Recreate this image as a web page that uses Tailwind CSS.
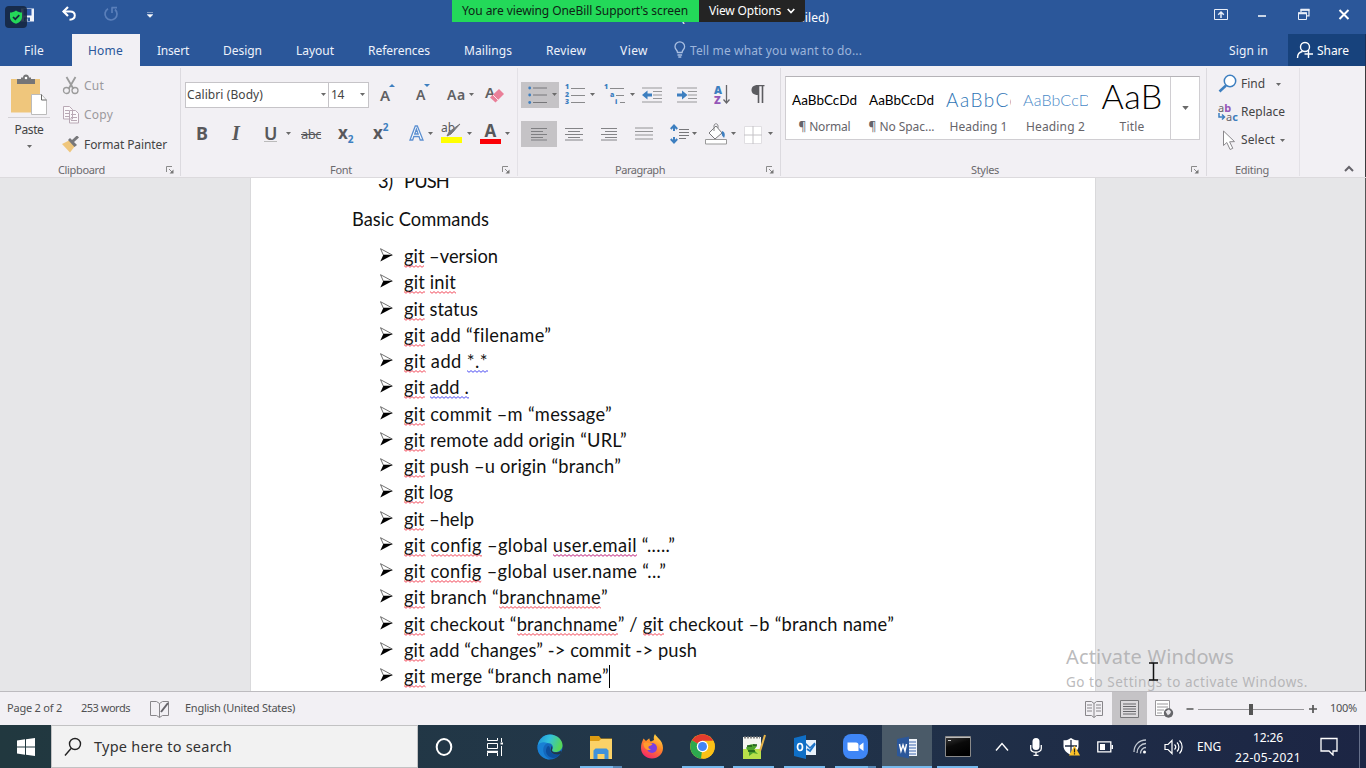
<!DOCTYPE html>
<html lang="en">
<head>
<meta charset="utf-8">
<title>Word</title>
<script src="https://cdn.jsdelivr.net/npm/@tailwindcss/browser@4"></script>
</head>
<body class="w-[1366px] h-[768px] overflow-hidden bg-[#e6e6e8] font-['Noto_Sans','Open_Sans',sans-serif] text-[12px] text-[#444]">
<svg width="0" height="0" class="absolute">
  <defs>
    <pattern id="wred" width="4" height="3" patternUnits="userSpaceOnUse"><path d="M0 .6 2 2.3 4 .6" fill="none" stroke="#f0384a" stroke-width=".9"/></pattern>
    <pattern id="wblue" width="4" height="3" patternUnits="userSpaceOnUse"><path d="M0 .6 2 2.3 4 .6" fill="none" stroke="#3a3af0" stroke-width=".9"/></pattern>
    <pattern id="wplum" width="4" height="3" patternUnits="userSpaceOnUse"><path d="M0 .6 2 2.3 4 .6" fill="none" stroke="#c0207a" stroke-width="1"/></pattern>
    <linearGradient id="edge" x1="0" y1="0" x2="1" y2="0.3"><stop offset="0" stop-color="#1d8fd8"/><stop offset=".5" stop-color="#33c1dc"/><stop offset="1" stop-color="#56d65a"/></linearGradient>
    <linearGradient id="ff" x1="0.8" y1="0" x2="0.3" y2="1"><stop offset="0" stop-color="#ffe14a"/><stop offset=".45" stop-color="#ff8a26"/><stop offset="1" stop-color="#f5246a"/></linearGradient>
    <linearGradient id="cmd" x1="0" y1="0" x2="0.4" y2="1"><stop offset="0" stop-color="#3c3c3c"/><stop offset=".5" stop-color="#0a0a0a"/><stop offset="1" stop-color="#000"/></linearGradient>
    <symbol id="dd" viewBox="0 0 5 3"><path d="M0 0h5L2.5 3z" fill="#6a6a6a"/></symbol>
    <symbol id="launch" viewBox="0 0 8 8"><path d="M.5 6V.5H6M3 3l3 3" fill="none" stroke="#8a8a8a"/><path d="M7.5 3.500v4h-4z" fill="#777"/></symbol>
    <symbol id="bullet" viewBox="0 0 13 14"><path d="M.5.7 12.300 7 3.300 7z" fill="#fff" stroke="#333" stroke-width=".7"/><path d="M12.500 7 .3 13.600 3.300 7z" fill="#000"/></symbol>
  </defs>
</svg>

<div class="relative flex h-[768px] w-[1366px] flex-col">

  <!-- title bar -->
  <header class="flex h-[34px] shrink-0 items-start bg-[#2b579a] text-white">
    <div class="flex w-[536px] pt-[6px]">
      <svg class="ml-[5px]" width="31" height="22" viewBox="5 5 31 22"><path d="M21 7.500h13v13H21z" fill="#f0f3fa"/><path d="M23.500 8h8v6.500h-8z" fill="#2f5aa8"/><path d="M24 16.500h6V20h-6z" fill="#2b579a"/><path d="M25.500 17.500h2V20h-2z" fill="#fff"/><rect x="5" y="5" width="22" height="22" rx="4" fill="#15263f" fill-opacity=".88"/><path d="M16 9.500c2 1.400 4 2 6 2.100v4.400c0 3.500-2.500 5.500-6 6.700-3.500-1.200-6-3.200-6-6.700v-4.400c2-.1 4-.7 6-2.100z" fill="#24d759"/><path d="m13 16 2.300 2.200 4-4" fill="none" stroke="#15263f" stroke-width="1.700"/></svg>
      <svg class="ml-[25px]" width="16" height="16" viewBox="0 0 16 16"><path d="M2 5.500h7c3 0 4.800 1.700 4.800 4 0 2.700-2 4-5.300 4.200" fill="none" stroke="#fff" stroke-width="2"/><path d="M7 1 2.500 5.500 7 10" fill="none" stroke="#fff" stroke-width="2.200"/></svg>
      <svg class="ml-[26px]" width="16" height="16" viewBox="0 0 16 16"><path d="M5 2.800A6 6 0 1 0 12 3.500" fill="none" stroke="#5a7fba" stroke-width="1.700"/><path d="M8.500 1.700H14M9 1.500V7" fill="none" stroke="#5a7fba" stroke-width="1.700"/></svg>
      <svg class="ml-[28px] mt-[6px]" width="6" height="6" viewBox="0 0 6 6"><path d="M0 .5h6M0 2.500h6L3 5.500z" fill="#fff" stroke="#fff" stroke-width=".4"/></svg>
    </div>
    <div class="w-[676px] pt-[9px] leading-[18px]"><span data-w="293" class="text-[12px]">Git -Notes-OneBill - Word (Product Activation Failed)</span></div>
    <svg class="mt-[8px]" width="150" height="14" viewBox="1212 8 150 14" fill="none" stroke="#e9eef8"><path d="M1214.500 9.500h13v10h-13z"/><path d="M1221 18v-6m-2.800 2.800 2.800-2.800 2.800 2.800" stroke-width="1.500"/><path d="M1258 16h8" stroke="#fff" stroke-width="1.500"/><path d="M1301 12v-2.200h8v6h-2" stroke-width="1.200"/><path d="M1298.500 13h8v6.500h-8z"/><path d="M1298 13.300h9M1300.500 9.700h9" stroke-width="2"/><path d="m1339.500 10 9 9m0-9-9 9" stroke="#fff" stroke-width="2"/></svg>
  </header>

  <!-- tabs -->
  <nav class="flex h-[32px] shrink-0 items-stretch bg-[#2b579a] text-[12px] leading-[33px] text-[#eef2fa]">
    <div class="w-[72px] pl-[24px]"><span data-w="20">File</span></div>
    <div class="w-[68px] bg-[#f2f0f4] pl-[16px] text-[#2b579a]"><span data-w="35">Home</span></div>
    <div class="w-[83px] pl-[17px]"><span data-w="32">Insert</span></div>
    <div class="w-[73px]"><span data-w="39">Design</span></div>
    <div class="w-[72px]"><span data-w="38">Layout</span></div>
    <div class="w-[96px]"><span data-w="62">References</span></div>
    <div class="w-[82px]"><span data-w="48">Mailings</span></div>
    <div class="w-[74px]"><span data-w="40">Review</span></div>
    <div class="w-[53px]"><span data-w="28">View</span></div>
    <div class="flex w-[556px] items-center text-[#9db5db]">
      <svg width="14" height="18" viewBox="0 0 14 18" fill="none" stroke="#a9bfe2" stroke-width="1.300"><path d="M4.500 11.500C4.500 9 2 8.500 2 5.700a4.800 4.800 0 0 1 9.600 0c0 2.800-2.500 3.300-2.500 5.800zM4.500 14h4.600M5.300 16h3"/></svg>
      <span class="ml-[3px]" data-w="172">Tell me what you want to do...</span>
    </div>
    <div class="w-[59px]"><span data-w="39">Sign in</span></div>
    <div class="flex w-[77px] items-center bg-[#17427c] text-white">
      <svg class="ml-[8px]" width="18" height="18" viewBox="0 0 18 18" fill="none" stroke="#fff" stroke-width="1.400"><circle cx="9" cy="6" r="4.500"/><path d="M1.500 17c0-3.500 2-6 5-6.500M12.500 9v8M8.500 13H17"/></svg>
      <span class="ml-[3px]" data-w="32">Share</span>
    </div>
    <div class="w-px bg-[#17305c]"></div>
  </nav>

  <!-- ribbon -->
  <section class="flex h-[112px] shrink-0 border-b border-[#dcdadd] bg-[#f2f0f4] pt-[2px]">

    <!-- clipboard -->
    <div class="flex h-[108px] w-[181px] flex-col border-r border-[#dcdadf]">
      <div class="flex h-[92px] shrink-0">
        <div class="flex w-[58px] flex-col items-center pt-[6px]">
          <svg width="38" height="42" viewBox="13 74 38 42"><path d="M14 79h29v33.500H14z" fill="#efc67c"/><path d="M20 79h4v-1.500h2c0-4 6-4 6 0h2V79h4v5H20z" fill="#757577"/><circle cx="29" cy="78" r="1.300" fill="#fff"/><path d="M34.500 94.500h10l5 5.500v14.500h-15z" fill="#fff" stroke="#bbb"/><path d="M44.500 94.500v5.500h5" fill="none" stroke="#666"/></svg>
          <div class="mt-[1px] h-px w-[42px] bg-[#d3d1d5]"></div>
          <span class="mt-[4px] leading-[16px]" data-w="29">Paste</span>
          <svg class="mt-[7px]" width="5" height="3"><use href="#dd"/></svg>
        </div>
        <div class="flex flex-col pl-[4px] pt-[3px]">
          <div class="flex h-[29px] items-center text-[#9b999d]"><svg width="18" height="19" viewBox="0 0 18 19" fill="none" stroke="#9b9b9b" stroke-width="1.300"><path d="m4.500 1 7 12M13.500 1l-7 12" stroke-width="1.800"/><circle cx="4.500" cy="14.500" r="3"/><circle cx="13" cy="14.500" r="3"/></svg><span class="ml-[4px]" data-w="20">Cut</span></div>
          <div class="flex h-[30px] items-center text-[#9b999d]"><svg width="18" height="20" viewBox="0 0 18 20" fill="#fbf9fb" stroke="#b9a9b5"><path d="M1.500 1.500h6l3 3V14h-9zM7.500 5.500h6l3 3V18h-9z"/><path d="M3 5.500h4m-4 3h4m-4 3h4m2-2h5m-5 3h6m-6 3h6"/></svg><span class="ml-[4px]" data-w="29">Copy</span></div>
          <div class="flex h-[29px] items-center"><svg width="18" height="17" viewBox="0 0 18 17"><path d="m0 8 8-4 5 6-5 6.500z" fill="#efc67c"/><path d="m6 4 2-2 7 7-2.500 2z" fill="#77777a"/><path d="m10.500 5.500 5.500-5" stroke="#77777a" stroke-width="3"/></svg><span class="ml-[4px]" data-w="83">Format Painter</span></div>
        </div>
      </div>
      <div class="flex h-[20px] shrink-0 items-center pl-[58px] text-[11px] text-[#6b696d]"><span class="w-[108px]"><span data-w="47">Clipboard</span></span><svg width="8" height="8"><use href="#launch"/></svg></div>
    </div>

    <!-- font -->
    <div class="flex h-[108px] w-[337px] flex-col border-r border-[#e3e1e6]">
      <div class="flex h-[53px] shrink-0 items-center pl-[4px]">
        <div class="flex h-[26px] w-[144px] items-center justify-between border border-[#c6c4c8] bg-white pl-[1px] pr-[2px]"><span data-w="76">Calibri (Body)</span><svg width="5" height="3"><use href="#dd"/></svg></div>
        <div class="-ml-px flex h-[26px] w-[41px] items-center justify-between border border-[#c6c4c8] bg-white pl-[2px] pr-[3px]"><span data-w="13">14</span><svg width="5" height="3"><use href="#dd"/></svg></div>
        <div class="flex w-[36px] pl-[11px] text-[15px] font-semibold leading-[20px] text-[#606063]">A<svg class="mt-[-1px] -ml-px" width="6" height="3"><path d="M0 3 3 0l3 3z" fill="#3d7fc0"/></svg></div>
        <div class="flex w-[42px] pl-[11px] text-[14px] font-semibold leading-[20px] text-[#606063]">A<svg class="mt-[-1px] -ml-px" width="6" height="3"><path d="M0 0h6L3 3z" fill="#3d7fc0"/></svg></div>
        <div class="flex w-[38px] items-center text-[14px] font-semibold text-[#606063]"><span data-w="19">Aa</span><svg class="ml-[3px]" width="5" height="3"><use href="#dd"/></svg></div>
        <div class="relative w-[22px] text-[15px] font-semibold leading-[18px] text-[#606063]"><span class="block pb-[5px]">A</span><svg class="absolute left-[4px] top-[6px]" width="16" height="14" viewBox="0 0 16 14"><path d="m10 0 5 5-8.500 8.500-5.500-5z" fill="#ea7f98"/><path d="m4 6 5 5" stroke="#fff" stroke-width=".8"/></svg></div>
      </div>
      <div class="flex h-[39px] shrink-0 items-start pl-[15px] text-[18px] font-bold leading-[24px] text-[#58585b]">
        <span class="w-[34px]">B</span>
        <span class="w-[34px] pl-[2px] font-['Liberation_Serif'] text-[20px] italic">I</span>
        <span class="flex w-[22px]"><span class="h-[21px] border-b border-[#bbb] font-semibold">U</span></span>
        <svg class="mt-[11px] mr-[10px]" width="5" height="3"><use href="#dd"/></svg>
        <span class="w-[37px] pt-[1px] text-[13px] font-normal line-through"><span data-w="20" class="line-through">abc</span></span>
        <span class="flex w-[35px] text-[17px]">x<span class="pt-[6px] text-[10px] text-[#3d7fc0]">2</span></span>
        <span class="flex w-[35px] text-[17px]">x<span class="pt-px text-[10px] leading-[10px] text-[#3d7fc0]">2</span></span>
        <svg class="mt-[3px]" width="17" height="19" viewBox="0 0 17 19"><path d="M2 16 7.300 2h2L15 16h-2.800l-1.200-3.500H5.800L4.700 16zM6.700 10h3.500L8.400 5z" fill="#fff" stroke="#5c8fd0" stroke-width="1.300"/></svg>
        <svg class="ml-[3px] mt-[11px]" width="5" height="3"><use href="#dd"/></svg>
        <div class="relative ml-[8px] h-[24px] w-[22px] text-[12px] font-normal leading-[13px]">ab<svg class="absolute left-0 top-[1px]" width="22" height="22"><path d="m19 2-9 10-4 2 2-4z" fill="#77777a" stroke="#77777a"/><path d="M0 15h21v6H0z" fill="#ff0"/></svg></div>
        <svg class="ml-[4px] mt-[11px]" width="5" height="3"><use href="#dd"/></svg>
        <div class="ml-[8px] flex h-[23px] w-[21px] justify-center border-b-[5px] border-[#fb0006] text-[17px] leading-[20px]">A</div>
        <svg class="ml-[4px] mt-[11px]" width="5" height="3"><use href="#dd"/></svg>
      </div>
      <div class="flex h-[20px] shrink-0 items-center pl-[149px] text-[11px] text-[#6b696d]"><span class="w-[172px]"><span data-w="22">Font</span></span><svg width="8" height="8"><use href="#launch"/></svg></div>
    </div>

    <!-- paragraph -->
    <div class="flex h-[108px] w-[263px] flex-col border-r border-[#dcdadf]">
      <div class="flex h-[53px] shrink-0 items-center pl-[3px] text-[#3d7fc0]">
        <div class="flex h-[26px] w-[38px] items-center bg-[#c5c3c6] pl-[7px]"><svg width="20" height="20" viewBox="0 0 20 20"><path d="M5 3h14M5 10h14M5 17.500h14" stroke="#77777a"/><g fill="#3d7fc0"><circle cx="1.700" cy="3" r="1.400"/><circle cx="1.700" cy="10" r="1.400"/><circle cx="1.700" cy="17.500" r="1.400"/></g></svg><svg class="ml-[4px]" width="5" height="3"><use href="#dd"/></svg></div>
        <div class="flex w-[38px] items-center pl-[6px]"><span class="flex w-[5px] flex-col text-[7px] font-bold leading-[7.500px]"><b>1</b><b>2</b><b>3</b></span><svg width="15" height="20"><path d="M1 3.500h14M1 10.500h14M1 17.500h14" stroke="#8a8a8c"/></svg><svg class="ml-[5px]" width="5" height="3"><use href="#dd"/></svg></div>
        <div class="flex w-[45px] items-center pl-[7px]"><span class="flex w-[15px] flex-col text-[7px] font-bold leading-[7.500px]"><b>1</b><b class="pl-[6px]">a</b><b class="pl-[11px]">i</b></span><svg class="-ml-[11px]" width="17" height="20"><path d="M2 3.500h14M8 10.500h8M12 17.500h5" stroke="#8a8a8c"/></svg><svg class="ml-[5px]" width="5" height="3"><use href="#dd"/></svg></div>
        <svg class="mr-[15px]" width="20" height="16" viewBox="0 0 20 16"><path d="M0 1h20M11 4.500h9M11 8h9M11 11.500h9M0 15h20" stroke="#98989a"/><path d="M5.500 3.500 0 8l5.500 4.500V9.500H10v-3H5.500z" fill="#3d7fc0"/></svg>
        <svg class="mr-[17px]" width="20" height="16" viewBox="0 0 20 16"><path d="M0 1h20M11 4.500h9M11 8h9M11 11.500h9M0 15h20" stroke="#98989a"/><path d="M5 3.500 10.500 8 5 12.500V9.500H0v-3h5z" fill="#3d7fc0"/></svg>
        <div class="flex w-[37px] items-center"><span class="flex w-[9px] flex-col text-[11px] font-bold leading-[10px]"><b>A</b><b class="text-[#9556b8]">Z</b></span><svg width="7" height="20"><path d="M3.500 0v18M.5 14.500l3 3.500 3-3.500" fill="none" stroke="#66666a" stroke-width="1.300"/></svg></div>
        <svg width="14" height="19" viewBox="0 0 14 19"><path d="M6 .5h7.500M7.500 0v18M11.500 0v18" stroke="#5c5c60" stroke-width="1.600"/><path d="M7 0v10C2 10 .5 7.500.5 5S2 0 7 0z" fill="#5c5c60"/></svg>
      </div>
      <div class="flex h-[39px] shrink-0 items-start pl-[3px]">
        <div class="flex h-[26px] w-[36px] items-center justify-center bg-[#c5c3c6]"><svg width="18" height="14"><path d="M1 1.500h16M1 4.500h12M1 7.500h16M1 10.500h12M1 13h16" stroke="#77777a" stroke-width=".9"/></svg></div>
        <svg class="ml-[8px] mt-[6px]" width="18" height="14"><path d="M0 1.500h18M3 4.500h12M0 7.500h18M3 10.500h12M0 13h18" stroke="#77777a" stroke-width=".9"/></svg>
        <svg class="ml-[17px] mt-[6px]" width="18" height="14"><path d="M1 1.500h16M5 4.500h12M1 7.500h16M5 10.500h12M1 13h16" stroke="#77777a" stroke-width=".9"/></svg>
        <svg class="ml-[17px] mt-[6px]" width="18" height="14"><path d="M0 1h18M0 4.500h18M0 8h18M0 12h18" stroke="#88888a" stroke-width=".9"/></svg>
        <svg class="ml-[17px] mt-[3px]" width="19" height="20" viewBox="0 0 19 20"><path d="M4 2v5M4 18v-5M.8 5 4 1.500 7.200 5M.8 15 4 18.500 7.200 15" fill="none" stroke="#3d7fc0" stroke-width="2"/><path d="M9 5.500h10M9 8.500h10M9 11.500h10M9 14.500h7" stroke="#77777a"/></svg>
        <svg class="ml-[3px] mt-[11px]" width="5" height="3"><use href="#dd"/></svg>
        <svg class="ml-[8px] mt-[2px]" width="22" height="22" viewBox="0 0 22 22"><path d="m4 10 7-7 6 7-7 6z" fill="#fff" stroke="#77777a"/><path d="M9 8V3c0-3 4-3 4 0v2" fill="none" stroke="#88888a"/><path d="M17 8c3 1 3.500 4 2 7-1-2-3-2-2-7z" fill="#3d7fc0"/><path d="M.5 16.500h21V21H.5z" fill="#fff" stroke="#999"/></svg>
        <svg class="ml-[4px] mt-[11px]" width="5" height="3"><use href="#dd"/></svg>
        <svg class="ml-[8px] mt-[5px]" width="18" height="18"><path d="M.5.5h17v17H.5z" fill="#fff" stroke="#e0dee2"/><path d="M9 0v18M0 9h18" stroke="#c4c2c6"/></svg>
        <svg class="ml-[6px] mt-[11px]" width="5" height="3"><use href="#dd"/></svg>
      </div>
      <div class="flex h-[20px] shrink-0 items-center pl-[97px] text-[11px] text-[#6b696d]"><span class="w-[151px]"><span data-w="50">Paragraph</span></span><svg width="8" height="8"><use href="#launch"/></svg></div>
    </div>

    <!-- styles -->
    <div class="flex h-[108px] w-[426px] flex-col border-r border-[#dcdadf]">
      <div class="flex h-[92px] shrink-0 items-start pl-[4px] pt-[8px]">
        <div class="flex h-[64px] w-[415px] border border-t-[#b5b3b7] border-[#d0ced2] bg-white text-[#66646a]">
          <div class="flex w-[77px] flex-col items-center"><span class="h-[40px] pt-[13px] font-['Lato'] text-[13.500px] leading-[20px] text-black"><span data-w="65">AaBbCcDd</span></span><span class="leading-[19px]"><span data-w="52">¶ Normal</span></span></div>
          <div class="flex w-[77px] flex-col items-center"><span class="h-[40px] pt-[13px] font-['Lato'] text-[13.500px] leading-[20px] text-black"><span data-w="65">AaBbCcDd</span></span><span class="leading-[19px]"><span data-w="66">¶ No Spac...</span></span></div>
          <div class="flex w-[77px] flex-col items-center"><span class="h-[40px] w-[65px] overflow-hidden whitespace-nowrap pt-[12px] font-['Lato'] text-[19px] font-light leading-[22px] text-[#2e74b5]"><span data-w="74">AaBbCc</span></span><span class="leading-[19px]"><span data-w="58">Heading 1</span></span></div>
          <div class="flex w-[77px] flex-col items-center"><span class="h-[40px] w-[65px] overflow-hidden whitespace-nowrap pt-[13px] font-['Lato'] text-[16px] font-light leading-[20px] text-[#4a8ac8]"><span data-w="68">AaBbCcD</span></span><span class="leading-[19px]"><span data-w="59">Heading 2</span></span></div>
          <div class="flex w-[76px] flex-col items-center"><span class="h-[40px] font-['Lato'] text-[34px] font-light leading-[38px] text-black"><span data-w="61">AaB</span></span><span class="leading-[19px]"><span data-w="25">Title</span></span></div>
          <div class="flex flex-1 items-center justify-center border-l border-[#d0ced2]"><svg width="7" height="4" viewBox="0 0 5 3"><use href="#dd"/></svg></div>
        </div>
      </div>
      <div class="flex h-[20px] shrink-0 items-center pl-[190px] text-[11px] text-[#6b696d]"><span class="w-[220px]"><span data-w="28">Styles</span></span><svg width="8" height="8"><use href="#launch"/></svg></div>
    </div>

    <!-- editing -->
    <div class="flex h-[108px] w-[93px] flex-col border-r border-[#e3e1e6]">
      <div class="flex h-[92px] shrink-0 flex-col pl-[11px] pt-[2px]">
        <div class="flex h-[28px] items-center"><svg width="20" height="20" viewBox="0 0 20 20"><circle cx="12" cy="7" r="5.700" fill="#fff" stroke="#3d7fc0" stroke-width="1.500"/><path d="m8 11.500-6.500 6" stroke="#3d7fc0" stroke-width="2.500"/></svg><span class="ml-[3px]" data-w="24">Find</span><svg class="ml-[11px]" width="5" height="3"><use href="#dd"/></svg></div>
        <div class="flex h-[28px] items-center"><div class="relative w-[21px] text-[11px] leading-[9px] text-[#66646a]"><span>a<b class="text-[#9556b8]">b</b></span><span class="block pl-[8px]">a<b class="text-[#3d7fc0]">c</b></span><svg class="absolute left-0 top-[10px]" width="8" height="8"><path d="M1 0v4h5M4 1.500 6.500 4 4 6.500" fill="none" stroke="#3d7fc0" stroke-width="1.500"/></svg></div><span class="ml-[2px]" data-w="44">Replace</span></div>
        <div class="flex h-[28px] items-center"><svg class="ml-[4px]" width="14" height="21" viewBox="0 0 14 21"><path d="M1.500 1v14.500l3.300-3 3.300 7 2.700-1.200-3.200-6.500 4.900-.2z" fill="#fff" stroke="#8a888c"/></svg><span class="ml-[5px]" data-w="34">Select</span><svg class="ml-[5px]" width="5" height="3"><use href="#dd"/></svg></div>
      </div>
      <div class="flex h-[20px] shrink-0 items-center pl-[28px] text-[11px] text-[#6b696d]"><span data-w="34">Editing</span></div>
    </div>
    <div class="flex flex-1 items-end justify-end pb-[5px] pr-[11px]"><svg width="10" height="7"><path d="m1 6 4-4 4 4" fill="none" stroke="#66646a" stroke-width="2"/></svg></div>
    <div class="-mt-[2px] w-px bg-[#3a3a3c]"></div>
  </section>

  <!-- document -->
  <main class="relative flex h-[513px] shrink-0 justify-start overflow-hidden bg-[#e6e6e8] pl-[250px] text-[18.300px] text-[#111]">
    <div id="page" class="flex h-[513px] w-[846px] flex-col border-x border-[#d9d9db] bg-white font-['Lato'] leading-[26.200px]">
      <div class="-mt-[10px] flex h-[26px] shrink-0 pl-[127px]"><span class="w-[26px]"><span data-w="15">3)</span></span><span data-w="45">PUSH</span></div>
      <div class="mt-[12px] flex h-[26px] shrink-0 pl-[101px]"><span data-w="137">Basic Commands</span></div>
      <ul id="list" class="mt-[11px] flex flex-col"></ul>
    </div>
    <div class="absolute left-[1066px] top-[466px] flex flex-col text-[#a9a9ab]/80">
      <span class="text-[20px] leading-[26px]"><span data-w="168">Activate Windows</span></span>
      <span class="text-[13.500px] leading-[24px]"><span data-w="242">Go to Settings to activate Windows.</span></span>
    </div>
    <svg class="absolute left-[1148px] top-[484px]" width="11" height="19"><path d="M1 1h9M1 18h9M5.500 1v17" stroke="#111" stroke-width="1.500"/></svg>
    <div class="absolute right-0 top-0 h-full w-px bg-[#555]"></div>
  </main>

  <!-- status bar -->
  <footer class="flex h-[34px] shrink-0 items-center border-t border-[#bdbbbf] bg-[#f2f0f4] text-[11px] text-[#505052]">
    <span class="w-[81px] pl-[7px]"><span data-w="55">Page 2 of 2</span></span>
    <span class="w-[69px]"><span data-w="49">253 words</span></span>
    <svg width="20" height="20" viewBox="0 0 20 20" fill="none" stroke="#88868a"><path d="M.5 2.500h6l3 2 3-2h6v14h-6l-3 2-3-2h-6zM9.500 4.500v14"/><path d="m11 13 7-9" stroke="#66646a" stroke-width="2"/></svg>
    <span class="ml-[15px] w-[900px]"><span data-w="110">English (United States)</span></span>
    <svg width="18" height="20" viewBox="0 0 18 20" fill="none" stroke="#88868a"><path d="M.5 2.500h6l2.500 2 2.500-2h6v14h-6l-2.500 2-2.500-2h-6zM9 4.500v14M2 6h5M2 9h5M2 12h5M11 6h5M11 9h5M11 12h5"/></svg>
    <div class="ml-[9px] flex h-[33px] w-[35px] items-center justify-center bg-[#c5c3c6]"><svg width="19" height="18"><path d="M.5.5h18v17H.5z" fill="#dcdadd" stroke="#77777a"/><path d="M3 4h13M3 6.500h13M3 9h13M3 11.500h13M3 14h13" stroke="#66666a"/></svg></div>
    <svg class="ml-[8px]" width="20" height="20" viewBox="0 0 20 20"><path d="M.5 1.500h14v15H.5z" fill="#fff" stroke="#99979b"/><path d="M2 5h11M2 8h11M2 11h7M2 14h5" stroke="#99979b"/><circle cx="13.500" cy="14" r="4.700" fill="#66666a"/><path d="M10.500 12.500c2-.5 3-3 4-1.500s2 1 1 3-2 1-2.500 2.500z" fill="#e8e6ea"/></svg>
    <svg class="ml-[10px]" width="134" height="14" viewBox="1185 0 134 14"><path d="M1186.500 7h7M1309 7h8M1313 3v8" stroke="#555" stroke-width="1.700"/><path d="M1198 7.500h106" stroke="#99979b"/><path d="M1249 2h4v11h-4z" fill="#555"/></svg>
    <span class="ml-[11px]" data-w="27">100%</span>
  </footer>

  <!-- taskbar -->
  <div class="flex h-[43px] shrink-0 items-stretch bg-gradient-to-r from-[#21383f] via-[#22364a] to-[#1c2544] text-white">
    <div class="flex w-[51px] items-center justify-center"><svg width="18" height="18" viewBox="0 0 18 18" fill="#fff"><path d="m0 2.500 8-1.200V8.500H0zM9 1.200 18 0v8.500H9zM0 9.500h8v7.200l-8-1.200zM9 9.500h9V18l-9-1.300z"/></svg></div>
    <div class="flex w-[367px] items-center border border-[#c2c2c3] bg-[#f2f2f2] text-[#333]"><svg class="ml-[12px]" width="18" height="22" viewBox="0 0 18 22" fill="none" stroke="#222" stroke-width="1.400"><circle cx="11" cy="8" r="5.500"/><path d="m7 12.500-6 7"/></svg><span class="ml-[12px] text-[14.500px]" data-w="138">Type here to search</span></div>
    <div class="flex w-[51px] items-center justify-center"><svg width="18" height="20"><ellipse cx="9" cy="10" rx="7.300" ry="8" fill="none" stroke="#fff" stroke-width="2"/></svg></div>
    <div class="mr-[4px] flex w-[51px] items-center justify-center"><svg width="18" height="18" viewBox="0 0 18 18" fill="none" stroke="#fff"><path d="M1.500 0v2.500h10V0M1.500 5.500h10v5h-10zM1.500 18v-3.500h10V18M15.500 0v4M15.500 8v10"/><path d="M14.500 5.500h2.500" stroke-width="2"/><path d="M1 13.500h11" stroke-width="1.500"/></svg></div>
    <div class="flex w-[51px] items-center justify-center"><svg width="26" height="26" viewBox="0 0 26 26"><circle cx="13" cy="13" r="12.500" fill="#1468bd"/><path d="M.7 12C1.500 5 7 .5 13 .5c7 0 12.500 5 12.500 11 0 4-3.500 6.500-7 6.500-3 0-4-1.500-3-3 1.500-3-1-6-5-6-5 0-8.500 3-9.800 3z" fill="url(#edge)"/><path d="M10.500 9C4 12 5 22 13 25.500 3 25.500-1 16 1 11c2-3 6-3.500 9.500-2z" fill="#1980d4"/><path d="M13 15c0 5 6 7 11 4-2 3-5 5-8 5-7-1-9-8-5-12 1.500 0 2 1.500 2 3z" fill="#0d4e9c"/><path d="M14.500 12c2 2-.5 4 1 5.500 2 1.500 6.500 1 9-1v3c-4 2-10 1-11-3z" fill="#21364a"/></svg></div>
    <div class="flex w-[51px] flex-col items-center justify-between pt-[10px]"><svg width="24" height="25" viewBox="0 0 24 25"><path d="M1 1h9l2 2.500h11v5H1z" fill="#dc9b12"/><path d="M1 6h9l2-2h11v20H1z" fill="#fbd267"/><path d="M4.500 24v-8.500l2-2h11l2 2V24h-4v-5h-7v5z" fill="#3f92dc"/></svg><div class="flex h-[2px] w-[42px]"><div class="w-[33px] bg-[#76b9ed]"></div><div class="w-[9px] bg-[#5687b5]"></div></div></div>
    <div class="flex w-[51px] items-center justify-center"><svg width="24" height="25" viewBox="0 0 24 25"><path d="M15 0c1 3 8 6 8 14 0 6-5 10.500-11 10.500S1 20 1 14C1 10 2 8 3.500 4.500L6 7l3-2.500c1-.5 0 2 2 3L14 6c-.5-2-.3-4 1-6z" fill="url(#ff)"/><circle cx="12" cy="14" r="5" fill="#7a3fe0"/><path d="M3.500 9c3-2 5 0 8 .5 2 .3 0 2-2 2.500s-1 3 1.500 3.500c-4 2-8-2-7.500-6.500z" fill="#ff9a2e"/></svg></div>
    <div class="flex w-[51px] flex-col items-center justify-between pt-[9px]"><svg width="25" height="25" viewBox="0 0 24 24"><circle cx="12" cy="12" r="11.800" fill="#fbc117"/><path d="M12 12 1.800 6.100a11.800 11.800 0 0 1 20.400 0z" fill="#e33b2e"/><path d="M1.800 6.100 12 12l0 0-1.500 11.700A11.800 11.800 0 0 1 1.800 6.100z" fill="#2da94f"/><path d="M12 6.500h10.500A11.800 11.800 0 0 1 12 23.800l5-9z" fill="#fbc117"/><circle cx="12" cy="12" r="5.500" fill="#fff"/><circle cx="12" cy="12" r="4.300" fill="#4285f4"/></svg><div class="h-[2px] w-[42px] bg-[#76b9ed]"></div></div>
    <div class="flex w-[51px] flex-col items-center justify-between pt-[9px]"><svg width="24" height="26" viewBox="0 0 24 26"><path d="M1 3h18v22H1z" fill="#f5f5f0"/><path d="M1 15h18v10H1z" fill="#b8e04a"/><path d="M2 3.500h16" stroke="#888" stroke-dasharray="2 1" stroke-width="2"/><path d="M4 14c2-4 8-5 11-2l-3 4 4 4-5-1-4 3v-4z" fill="#4da32c"/><path d="M5 12h5M11 11h4M6 17h7" stroke="#1e5a1a" stroke-width="1.500"/><path d="m23 1-5 16" stroke="#e8b54a" stroke-width="2"/></svg><div class="h-[2px] w-[41px] bg-[#76b9ed]"></div></div>
    <div class="flex w-[51px] flex-col items-center justify-between pt-[9px]"><svg width="24" height="26" viewBox="0 0 24 26"><path d="M11 6h12v15H11z" fill="#e9f2fb"/><path d="m12 9 5 5 5-5" fill="none" stroke="#1e74c8" stroke-width="1.500"/><path d="m14 15 3 2 5-7" fill="none" stroke="#1e74c8" stroke-width="2"/><path d="m1 4 12-3v24L1 22z" fill="#0f6fc6"/><ellipse cx="7" cy="13" rx="2.500" ry="3.500" fill="none" stroke="#fff" stroke-width="1.700"/></svg><div class="h-[2px] w-[41px] bg-[#76b9ed]"></div></div>
    <div class="flex w-[51px] flex-col items-center justify-between pt-[9px]"><svg width="25" height="25" viewBox="0 0 25 25"><rect width="25" height="25" rx="8" fill="#3f86f6"/><path d="M4.500 8.500H13q2.500 0 2.500 2.500v6H7q-2.500 0-2.500-2.500zM16.500 11.500l4-3v8.500l-4-3z" fill="#fff"/></svg><div class="flex h-[2px] w-[41px]"><div class="w-[33px] bg-[#76b9ed]"></div><div class="w-[8px] bg-[#5687b5]"></div></div></div>
    <div class="ml-[1px] flex w-[50px] flex-col items-center justify-between bg-[#4a5a68] pt-[11px]"><svg width="22" height="23" viewBox="0 0 22 23"><path d="M11 3h10v17H11z" fill="#f0f4fa"/><path d="M13 6h7M13 9h7M13 12h7M13 15h7M13 18h7" stroke="#3d66ae"/><path d="m1 3 12-2.500v22L1 20z" fill="#2b579a"/><path d="m3.500 8 1.500 7 2-6 2 6 1.500-7" fill="none" stroke="#fff" stroke-width="1.400"/></svg><div class="h-[2px] w-[50px] bg-[#76b9ed]"></div></div>
    <div class="flex w-[51px] flex-col items-center justify-between pt-[11px]"><svg width="26" height="21"><path d="M.5.5h25v20H.5z" fill="url(#cmd)" stroke="#8a8a8a"/><path d="M1 1.500h24" stroke="#bbb"/><path d="M3 4.500h3" stroke="#ccc"/></svg><div class="h-[2px] w-[41px] bg-[#76b9ed]"></div></div>
    <div class="flex w-[38px] items-center justify-center"><svg width="14" height="10"><path d="m1 8.500 6-7 6 7" fill="none" stroke="#fff" stroke-width="1.400"/></svg></div>
    <div class="flex w-[30px] items-center justify-center"><svg width="12" height="18" fill="#fff"><rect x="2.500" width="7" height="12" rx="3.500"/><path d="M.7 7v3.500c0 5 10.600 5 10.600 0V7M6 14v4M3.500 17.300h5" fill="none" stroke="#fff" stroke-width="1.300"/></svg></div>
    <div class="flex w-[40px] items-center justify-center"><svg width="17" height="18" viewBox="0 0 17 18"><path d="M8 0c3 2 5 2.300 7.500 2.300V8c0 4-3 7-7.500 9C3.500 15 .5 12 .5 8V2.300C3 2.300 5 2 8 0z" fill="#fff"/><path d="M8 2v13M2 8h12" stroke="#1f2c45" stroke-width="1.300"/><path d="m11.500 7.500 5.500 10H6z" fill="#fcc32a"/><path d="M11.500 10.500v4M11.500 15.300v1.200" stroke="#222" stroke-width="1.200"/></svg></div>
    <div class="flex w-[28px] items-center justify-center"><svg width="17" height="12"><path d="M.8.8h13v10h-13z" fill="none" stroke="#fff" stroke-width="1.300"/><path d="M3 3h5v6H3zM14.500 4H16v4h-1.500z" fill="#fff"/></svg></div>
    <div class="flex w-[42px] items-center justify-center"><svg width="14" height="15" viewBox="0 0 14 15" fill="none" stroke="#c3cad3" stroke-width="1.300"><path d="M1 13C1 6 6 1 13 1M4 14c0-5 4-9.500 9-9.500M7.500 14.500c0-3.500 2.500-6 5.500-6"/><circle cx="11.500" cy="13" r="1.500" fill="#fff" stroke="none"/></svg></div>
    <div class="flex w-[24px] items-center justify-center"><svg width="19" height="16" viewBox="0 0 19 16" fill="none" stroke="#fff" stroke-width="1.200"><path d="M1 5.500h3l4-4v13l-4-4H1zM10.500 5.500c1.500 1.500 1.500 3.500 0 5M13 3.500c2.500 2.500 2.500 6.500 0 9M15.500 1.500c3.500 3.500 3.500 9.500 0 13"/></svg></div>
    <div class="flex w-[48px] items-center justify-center"><span data-w="24">ENG</span></div>
    <div class="flex w-[70px] flex-col items-center pt-[3px] leading-[20px]"><span data-w="30">12:26</span><span data-w="66">22-05-2021</span></div>
    <div class="flex w-[52px] items-center justify-center"><svg width="18" height="19"><path d="M1 1.500h16v12.500h-4v4l-4-4H1z" fill="none" stroke="#fff" stroke-width="1.300"/></svg></div>
    <div class="ml-[4px] w-px bg-[#66708a]"></div>
  </div>

  <!-- screen sharing banner -->
  <div class="absolute left-[452px] top-0 flex h-[22px] overflow-hidden rounded-br-[4px] text-[12px] leading-[22px]">
    <div class="w-[247px] bg-[#23d959] pl-[10px] text-[#0e2416]"><span data-w="226">You are viewing OneBill Support's screen</span></div>
    <div class="flex w-[106px] items-center bg-[#242424] pl-[10px] text-white"><span data-w="72">View Options</span><svg class="ml-[6px]" width="8" height="6"><path d="m.7 1 3.300 3.500L7.300 1" fill="none" stroke="#fff" stroke-width="1.700"/></svg></div>
  </div>
</div>

<script>
// [width, text]: r{} red, b{} blue, p{} plum squiggle
const rows = [
  [94, 'r{git} –version'], [52, 'r{git} r{init}'], [74, 'r{git} status'], [147, 'r{git} add “filename”'],
  [84, 'r{git} add b{*.*}'], [65, 'r{git} b{add .}'], [208, 'r{git} commit –m “message”'],
  [223, 'r{git} remote add origin “URL”'], [217, 'r{git} push –u origin “branch”'], [49, 'r{git} log'], [70, 'r{git} –help'],
  [271, 'r{git} r{config} –global p{user.email} “.....”'], [262, 'r{git} r{config} –global user.name “...”'],
  [204, 'r{git} branch “r{branchname}”'], [490, 'r{git} checkout “r{branchname}” / r{git} checkout –b “branch name”'],
  [293, 'r{git} add “changes” -> commit -> push'], [205, 'r{git} merge “branch name”']
];
const fills = { r: 'wred', b: 'wblue', p: 'wplum' };
document.getElementById('list').innerHTML = rows.map(([w, t], i) => {
  const h = t.replace(/>/g, '&gt;').replace(/([rbp])\{([^}]*)\}/g, (m, k, s) =>
    `<span class="relative">${s}<svg class="absolute left-0 bottom-[-1px] h-[3px] w-full"><rect width="100%" height="3" fill="url(#${fills[k]})"/></svg></span>`);
  const caret = i === rows.length - 1 ? '<i class="mt-[2px] h-[23px] w-px bg-black"></i>' : '';
  return `<li class="flex h-[26.250px] shrink-0 pl-[129px]"><svg class="mr-[11px] mt-[5px] shrink-0" width="13" height="14"><use href="#bullet"/></svg><span data-w="${w}">${h}</span>${caret}</li>`;
}).join('');
// track each label so that it spans its data-w width
function fit() {
  document.querySelectorAll('[data-w]').forEach(e => {
    e.style.whiteSpace = 'pre';
    e.style.display = 'inline-block';
    e.style.flexShrink = 0;
    e.style.letterSpacing = '0px';
    const n = e.textContent.length, w = +e.dataset.w;
    e.style.letterSpacing = (w - e.getBoundingClientRect().width) / n + 'px';
  });
}
fit();
addEventListener('load', () => { fit(); [0, 30, 100, 250].forEach(t => setTimeout(fit, t)); });
document.fonts.ready.then(fit);
</script>
</body>
</html>
